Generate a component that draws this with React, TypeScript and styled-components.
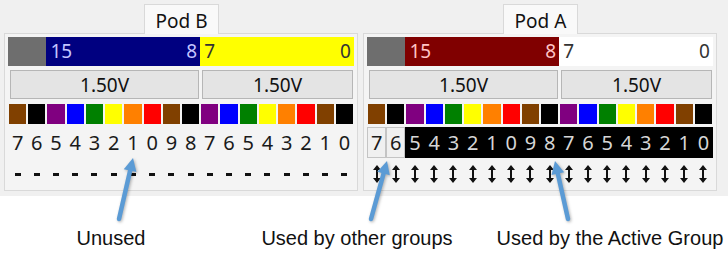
import styled, { createGlobalStyle } from 'styled-components'

const GlobalStyle = createGlobalStyle`
  html, body {
    margin: 0;
    padding: 0;
    background: #ffffff;
  }
  body {
    font-family: "Noto Sans", "Open Sans", sans-serif;
  }
`

const SWATCHES = ['#804000', '#000000', '#800080', '#0000ff', '#008000', '#ffff00', '#ff8000', '#ff0000']
const COLS = 18

type CellState = 'unused' | 'other' | 'active'

const Page = styled.div`
  position: relative;
  width: 728px;
  height: 254px;
  overflow: hidden;
`

const Window = styled.div`
  background: #f0f0f0;
  height: 196px;
  padding: 4px 0 0 4px;
  box-sizing: border-box;
  display: flex;
  gap: 5px;
`

const PodFrame = styled.div`
  width: 354px;
  display: flex;
  flex-direction: column;
`

const TabBar = styled.div`
  display: flex;
  padding-left: 140px;
  height: 29px;
`

const Tab = styled.div`
  width: 75px;
  box-sizing: border-box;
  border: 1px solid #d9d9d9;
  border-bottom: none;
  background: #f9f9f9;
  margin-bottom: -1px;
  position: relative;
  z-index: 1;
  display: flex;
  align-items: center;
  justify-content: center;
  font-size: 19px;
  color: #111;
  padding-top: 2px;
`

const Pane = styled.div`
  border: 1px solid #d9d9d9;
  background: #f4f4f4;
  padding: 3px 3px 0 3px;
  display: flex;
  flex-direction: column;
`

const Grid = styled.div`
  display: grid;
  grid-template-columns: repeat(${COLS}, 1fr);
`

const BarRow = styled(Grid)`
  height: 29px;
`

const BarSeg = styled.div<{ $span: number; $bg: string; $fg: string }>`
  grid-column: span ${p => p.$span};
  background: ${p => p.$bg};
  color: ${p => p.$fg};
  display: flex;
  align-items: center;
  justify-content: space-between;
  padding: 0 3px 0 4px;
  font-size: 19px;
  line-height: 1;
`

const ButtonRow = styled(Grid)`
  margin-top: 3px;
  height: 31px;
`

const VoltButton = styled.div<{ $span: number }>`
  grid-column: span ${p => p.$span};
  margin: 1px 1px 1px 2px;
  background: #e4e4e4;
  border: 1px solid #b6b6b6;
  display: flex;
  align-items: center;
  justify-content: center;
  font-size: 19px;
  color: #111;
`

const SwatchRow = styled(Grid)`
  margin-top: 4px;
  height: 20px;
`

const Swatch = styled.div<{ $color: string }>`
  margin: 0 1px;
  background: ${p => p.$color};
`

const DigitRow = styled(Grid)`
  margin-top: 3px;
  height: 31px;
`

const DigitCell = styled.div<{ $state: CellState }>`
  display: flex;
  align-items: center;
  justify-content: center;
  font-size: 20px;
  box-sizing: border-box;
  color: ${p => (p.$state === 'active' ? '#d6d6d6' : '#1a1a1a')};
  background: ${p => (p.$state === 'active' ? '#000000' : p.$state === 'other' ? '#f0f0f0' : 'transparent')};
  border: 1px solid ${p => (p.$state === 'other' ? '#c4c4c4' : 'transparent')};
  & + & {
    margin-left: ${p => (p.$state === 'other' ? '-1px' : '0')};
  }
`

const SymbolRow = styled(Grid)`
  height: 32px;
`

const SymbolCell = styled.div`
  display: flex;
  align-items: center;
  justify-content: center;
`

const Dash = styled.div`
  width: 6px;
  height: 3px;
  background: #111;
`

const Labels = styled.div`
  display: grid;
  grid-template-columns: 222px 270px 236px;
  padding-top: 31px;
  font-family: "Liberation Sans", Arial, sans-serif;
  font-size: 20px;
  color: #111;
`

const Label = styled.div`
  text-align: center;
`

const Overlay = styled.svg`
  position: absolute;
  left: 0;
  top: 0;
  pointer-events: none;
`

function UpDown() {
  return (
    <svg width="8" height="18" viewBox="0 0 8 18">
      <path d="M4 0 L8 5 L5 5 L5 13 L8 13 L4 18 L0 13 L3 13 L3 5 L0 5 Z" fill="#111" />
    </svg>
  )
}

function Arrow({ x1, y1, x2, y2 }: { x1: number; y1: number; x2: number; y2: number }) {
  const dx = x2 - x1
  const dy = y2 - y1
  const len = Math.hypot(dx, dy)
  const ux = dx / len
  const uy = dy / len
  const head = 13
  const half = 6.5
  const bx = x2 - ux * head
  const by = y2 - uy * head
  const pts = `${x2},${y2} ${bx - uy * half},${by + ux * half} ${bx + uy * half},${by - ux * half}`
  return (
    <g>
      <line x1={x1} y1={y1} x2={bx} y2={by} stroke="#5b9bd5" strokeWidth={4.5} strokeLinecap="round" />
      <polygon points={pts} fill="#5b9bd5" />
    </g>
  )
}

type PodProps = {
  name: string
  high: { bg: string; fg: string }
  low: { bg: string; fg: string }
  digitState: (i: number) => CellState
  active: boolean
}

function Pod({ name, high, low, digitState, active }: PodProps) {
  const cols = Array.from({ length: COLS }, (_, i) => i)
  return (
    <PodFrame>
      <TabBar>
        <Tab>{name}</Tab>
      </TabBar>
      <Pane>
        <BarRow>
          <BarSeg $span={2} $bg="#6e6e6e" $fg="#fff" />
          <BarSeg $span={8} $bg={high.bg} $fg={high.fg}>
            <span>15</span>
            <span>8</span>
          </BarSeg>
          <BarSeg $span={8} $bg={low.bg} $fg={low.fg}>
            <span>7</span>
            <span>0</span>
          </BarSeg>
        </BarRow>
        <ButtonRow>
          <VoltButton $span={10}>1.50V</VoltButton>
          <VoltButton $span={8}>1.50V</VoltButton>
        </ButtonRow>
        <SwatchRow>
          {cols.map(i => (
            <Swatch key={i} $color={SWATCHES[i % SWATCHES.length]} />
          ))}
        </SwatchRow>
        <DigitRow>
          {cols.map(i => (
            <DigitCell key={i} $state={digitState(i)}>
              {(17 - i) % 10}
            </DigitCell>
          ))}
        </DigitRow>
        <SymbolRow>
          {cols.map(i => (
            <SymbolCell key={i}>{active ? <UpDown /> : <Dash />}</SymbolCell>
          ))}
        </SymbolRow>
      </Pane>
    </PodFrame>
  )
}

export default function App() {
  return (
    <Page>
      <GlobalStyle />
      <Window>
        <Pod
          name="Pod B"
          high={{ bg: '#000080', fg: '#c4c4ff' }}
          low={{ bg: '#ffff00', fg: '#333' }}
          digitState={() => 'unused'}
          active={false}
        />
        <Pod
          name="Pod A"
          high={{ bg: '#800000', fg: '#ffc4c4' }}
          low={{ bg: '#ffffff', fg: '#333' }}
          digitState={i => (i < 2 ? 'other' : 'active')}
          active
        />
      </Window>
      <Labels>
        <Label>Unused</Label>
        <Label>Used by other groups</Label>
        <Label>Used by the Active Group</Label>
      </Labels>
      <Overlay width="728" height="254" style={{ filter: 'drop-shadow(1.5px 1.5px 1.5px rgba(0,0,0,0.3))' }}>
        <Arrow x1={119} y1={219} x2={133} y2={158} />
        <Arrow x1={371} y1={219} x2={387} y2={161} />
        <Arrow x1={568} y1={219} x2={555} y2={161} />
      </Overlay>
    </Page>
  )
}
